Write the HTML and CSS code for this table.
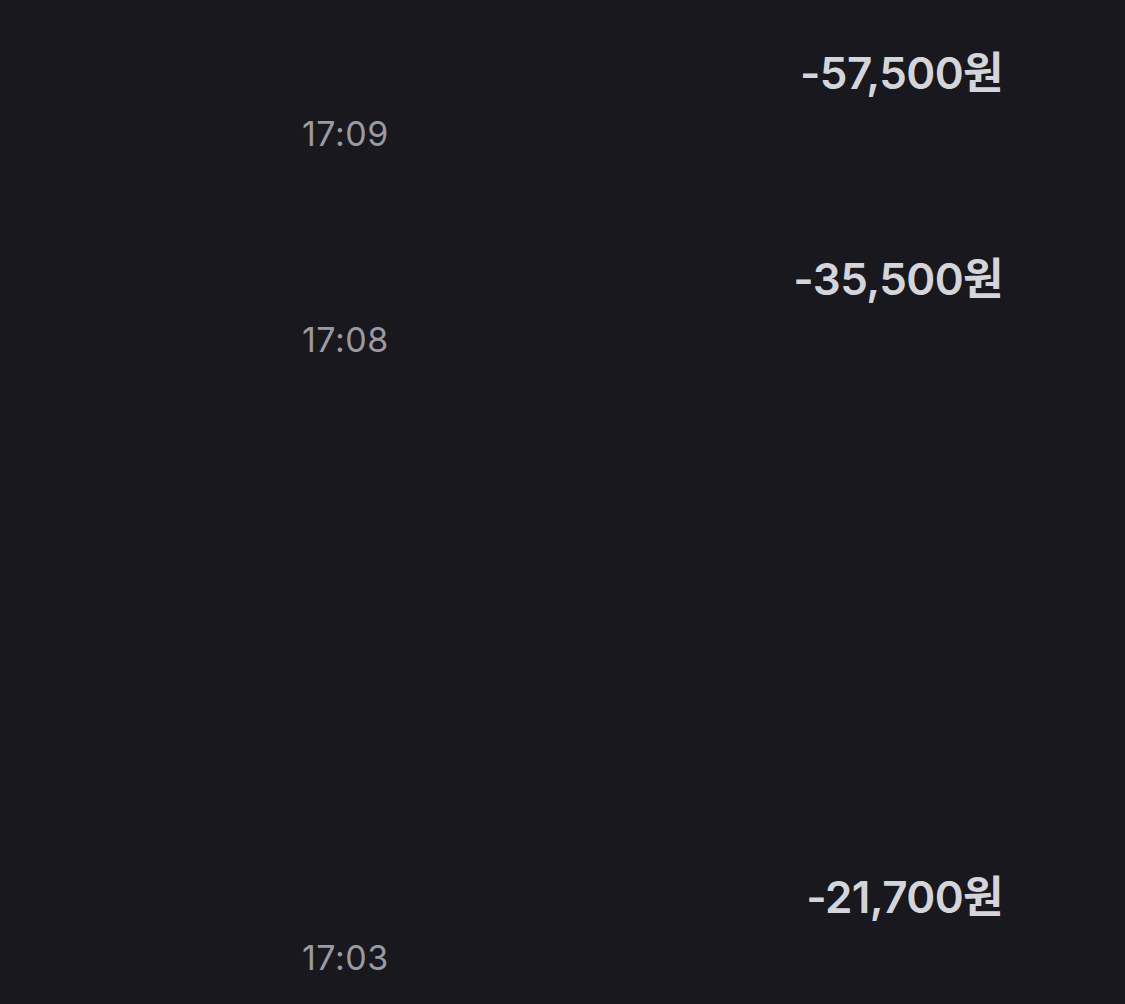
FILE: index.html
```html
<!DOCTYPE html>
<html lang="ko">
<head>
    <meta charset="UTF-8">
    <meta name="viewport" content="width=device-width, initial-scale=1.0">
    <title>거래내역</title>
    <link rel="stylesheet" href="styles.css">
</head>
<body>
    <div class="list">
        <div class="row">
            <div class="amount">-57,500원</div>
            <div class="time">17:09</div>
        </div>
        <div class="row">
            <div class="amount">-35,500원</div>
            <div class="time">17:08</div>
        </div>
        <!-- hidden rows -->
        <div class="row blank"></div>
        <div class="row blank"></div>
        <div class="row">
            <div class="amount">-21,700원</div>
            <div class="time">17:03</div>
        </div>
    </div>
</body>
</html>
```

FILE: styles.css
```css
/* transaction list, dark */
body {
    margin: 0;
    padding: 0;
    background-color: #18181e;
    font-family: Inter, "Noto Sans CJK KR", sans-serif;
    overflow: hidden;
}

.list {
    display: flex;
    flex-direction: column;
}

.row {
    height: 206px;
    box-sizing: border-box;
    padding: 47px 122px 0 302px;
    display: flex;
    flex-direction: column;
}

.amount {
    align-self: flex-end;
    font-size: 44px;
    font-weight: 600;
    line-height: 52px;
    color: #d4d4db;
    letter-spacing: -0.6px;
}

.time {
    margin-top: 15px;
    font-size: 34px;
    line-height: 40px;
    color: #9a9aa2;
    letter-spacing: 0.5px;
}
```
